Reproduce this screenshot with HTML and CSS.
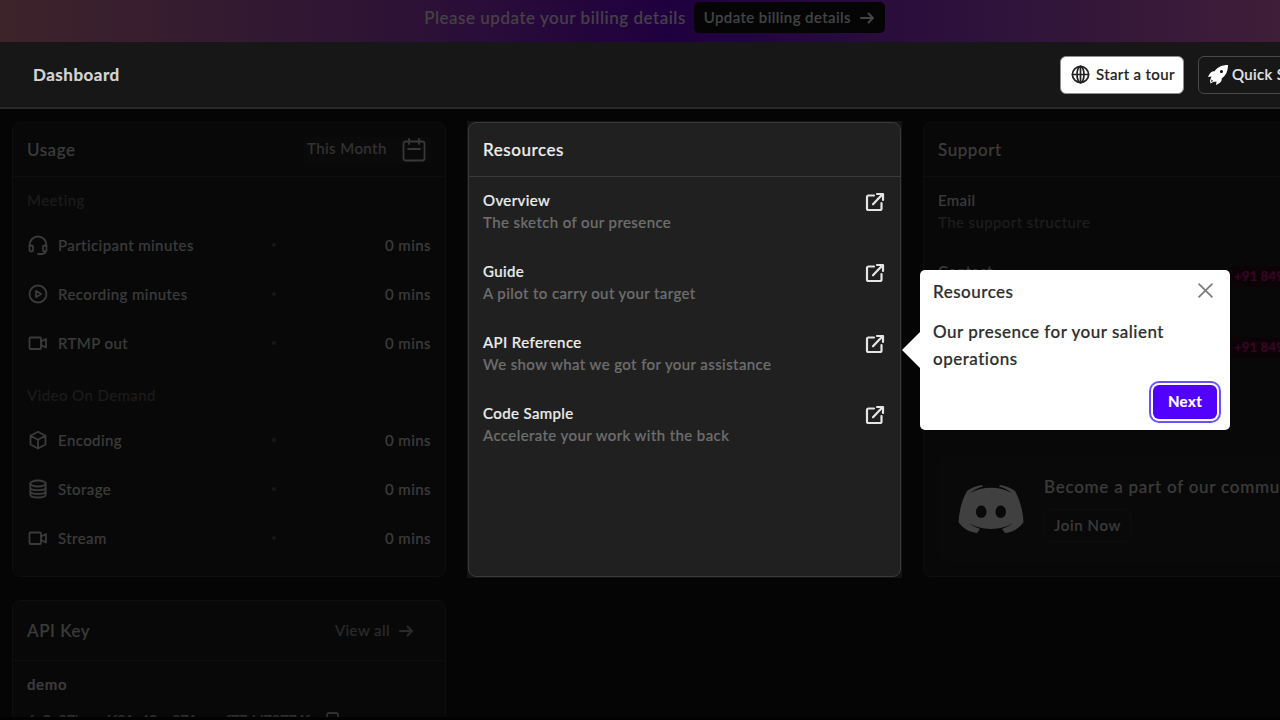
FILE: index.html
```html
<!DOCTYPE html>
<html lang="en">
<head>
<meta charset="utf-8">
<title>Dashboard</title>
<link rel="stylesheet" href="styles.css">
</head>
<body>
<svg class="sprite" width="0" height="0">
  <symbol id="ext" viewBox="0 0 20 20"><path d="M9 3.500H3.600Q2 3.500 2 5.100V16.400Q2 18 3.600 18H14.900Q16.500 18 16.500 16.400V11M8 12.300L17.500 2.300M12 2H18V8"/></symbol>
  <symbol id="arrow" viewBox="0 0 16 16"><path d="M2 8H14M9.500 3.500L14 8L9.500 12.500"/></symbol>
  <symbol id="camera" viewBox="0 0 20 20"><rect x="1.500" y="4.500" width="11.500" height="11.500" rx="1"/><path d="M13 8.500L18 6V14.500L13 12"/></symbol>
</svg>
<div class="page">
  <div class="banner">
    <span class="banner-text">Please update your billing details</span>
    <button class="banner-btn"><span>Update billing details</span><svg class="ic16"><use href="#arrow"/></svg></button>
  </div>
  <header class="topbar">
    <h1 class="title">Dashboard</h1>
    <div class="actions">
      <button class="btn light"><svg class="globe" viewBox="0 0 20 20"><circle cx="10" cy="10" r="8.500"/><ellipse cx="10" cy="10" rx="3.700" ry="8.500"/><path d="M10 1.500V18.500M1.500 10H18.500"/></svg><span>Start a tour</span></button>
      <button class="btn dark"><svg class="rocket" viewBox="0 0 20 20"><path fill-rule="evenodd" d="M20 0C14 0 9.500 2 6.500 6.300C4 6 2 7.500 0 12L3.500 11.500L2 15.500L2.500 18.500L5 17L8.500 16.500L8 20C12.500 18 14 16 13.700 13.500C18 10.500 20 6 20 0ZM13.500 4.900A1.600 1.600 0 1 1 13.400 8.100A1.600 1.600 0 0 1 13.500 4.900ZM3.600 14.500L5.200 16L3 16.800Z"/></svg><span>Quick Start</span></button>
    </div>
  </header>
  <main class="grid">
    <section class="card">
      <div class="card-head"><h2>Usage</h2><div class="month"><span>This Month</span><svg class="cal" viewBox="0 0 24 24"><rect x="1.500" y="3.500" width="21" height="19" rx="2"/><path d="M7 1V6M17 1V6M6 11H18"/></svg></div></div>
      <p class="label">Meeting</p>
      <div class="row"><svg class="ic"><path d="M1.500 12V10A8.500 8.500 0 0 1 18.500 10V14Q18.500 18.500 14 19H10M1.500 12C1.500 10 5 10 5 12V15C5 17 1.500 17 1.500 15ZM18.500 12C18.500 10 15 10 15 12V15C15 17 18.500 17 18.500 15"/></svg><span>Participant minutes</span><i></i><b>0 mins</b></div>
      <div class="row"><svg class="ic"><circle cx="10" cy="10" r="8.500"/><path d="M8 6.800L13 10L8 13.200Z"/></svg><span>Recording minutes</span><i></i><b>0 mins</b></div>
      <div class="row"><svg class="ic"><use href="#camera"/></svg><span>RTMP out</span><i></i><b>0 mins</b></div>
      <p class="label second">Video On Demand</p>
      <div class="row"><svg class="ic"><path d="M10 1.800L17.500 5.800V14.500L10 18.500L2.500 14.500V5.800ZM2.500 5.800L10 9.800L17.500 5.800M10 9.800V18.500"/></svg><span>Encoding</span><i></i><b>0 mins</b></div>
      <div class="row"><svg class="ic"><ellipse cx="10" cy="4.500" rx="7.700" ry="3"/><path d="M2.300 4.500V15.500C2.300 19.500 17.700 19.500 17.700 15.500V4.500M2.300 8.200C2.300 12.200 17.700 12.200 17.700 8.200M2.300 11.900C2.300 15.900 17.700 15.900 17.700 11.900"/></svg><span>Storage</span><i></i><b>0 mins</b></div>
      <div class="row"><svg class="ic"><use href="#camera"/></svg><span>Stream</span><i></i><b>0 mins</b></div>
    </section>
    <div class="spot">
      <section class="card lit">
        <div class="card-head"><h2>Resources</h2></div>
        <div class="item"><div><h3>Overview</h3><p>The sketch of our presence</p></div><svg class="ext"><use href="#ext"/></svg></div>
        <div class="item"><div><h3>Guide</h3><p>A pilot to carry out your target</p></div><svg class="ext"><use href="#ext"/></svg></div>
        <div class="item"><div><h3>API Reference</h3><p>We show what we got for your assistance</p></div><svg class="ext"><use href="#ext"/></svg></div>
        <div class="item"><div><h3>Code Sample</h3><p>Accelerate your work with the back</p></div><svg class="ext"><use href="#ext"/></svg></div>
      </section>
    </div>
    <section class="card support">
      <div class="card-head"><h2>Support</h2></div>
      <div class="item"><div><h3>Email</h3><p>The support structure</p></div></div>
      <div class="item"><h3>Contact</h3><span class="phone">+91 8490959</span></div>
      <div class="item"><span class="phone">+91 8490959</span></div>
      <div class="community">
        <svg class="discord" viewBox="0 0 66 50"><path fill-rule="evenodd" d="M25 2.500L24 1C17 2 12 4.500 9 7C4 16 1 27 .5 38C5 45 12 48 19 49L22 45C17 43 13 41 10.500 38.500C22 47 44 47 55.500 38.500C53 41 49 43 44 45L47 49C54 48 61 45 65.500 38C65 27 62 16 57 7C54 4.500 49 2 42 1L41 2.500C47 4 51 6.500 54 9C41 2 25 2 12 9C15 6.500 19 4 25 2.500ZM23.300 21.500C26.200 21.500 28.500 24.300 28.500 27.800C28.500 31.200 26.200 34 23.300 34C20.400 34 18 31.200 18 27.800C18 24.300 20.400 21.500 23.300 21.500ZM42.700 21.500C45.600 21.500 48 24.300 48 27.800C48 31.200 45.600 34 42.700 34C39.800 34 37.500 31.200 37.500 27.800C37.500 24.300 39.800 21.500 42.700 21.500Z"/></svg>
        <div class="join"><h4>Become a part of our community</h4><button>Join Now</button></div>
      </div>
    </section>
    <section class="card api">
      <div class="card-head tall"><h2>API Key</h2><a class="view"><span>View all</span><svg class="ic16"><use href="#arrow"/></svg></a></div>
      <p class="demo">demo</p>
      <div class="key"><span>6a2e87bcce6f81a42ea871eaecf77dd78774f</span><svg class="copy" viewBox="0 0 16 16"><rect x="3" y="1" width="11" height="12" rx="2"/></svg></div>
    </section>
  </main>
</div>
<div class="tour">
  <div class="tour-head"><span>Resources</span><svg class="close" viewBox="0 0 14 14"><path d="M1 1L13 13M13 1L1 13"/></svg></div>
  <p>Our presence for your salient operations</p>
  <button class="next">Next</button>
</div>
</body>
</html>
```
FILE: styles.css
```css
* { box-sizing: border-box; margin: 0; padding: 0; }
html, body { width: 1280px; height: 720px; overflow: hidden; background: #020202; }
body { font-family: Lato, "Open Sans", sans-serif; font-weight: 500; font-size: 15px; position: relative; letter-spacing: .42px; -webkit-text-stroke: .2px currentColor; }
button { font: inherit; letter-spacing: inherit; border: 0; background: none; }
h1, h2, h3, h4 { font-weight: 500; }
svg { fill: none; stroke: currentColor; stroke-width: 1.8; stroke-linecap: round; stroke-linejoin: round; flex: none; display: block; }
.sprite { position: absolute; }
.page { width: 1280px; height: 717px; overflow: hidden; background: #050505; display: flex; flex-direction: column; }
.banner { height: 42px; flex: none; width: 1309px; padding-bottom: 7px; display: flex; align-items: center; justify-content: center; gap: 8px; color: #464047; background: linear-gradient(90deg, #3d242a 0%, #2d1136 32%, #1f003f 51%, #2d113b 73%, #3f1e38 98%); }
.banner-text { font-size: 17px; letter-spacing: .53px; padding-bottom: 1px; }
.banner-btn { width: 191px; height: 31px; border-radius: 5px; background: #050505; color: #454545; display: flex; align-items: center; justify-content: center; gap: 8px; padding-bottom: 2px; white-space: nowrap; }
.ic16 { width: 16px; height: 16px; stroke-width: 2; }
.banner-btn .ic16 { margin-top: 2px; }
.topbar { width: 1368px; height: 67px; flex: none; background: #171717; border-bottom: 2px solid #292929; display: flex; align-items: center; justify-content: space-between; padding: 0 0 0 33px; }
.title { color: #d5d5d5; font-size: 17px; font-weight: 700; letter-spacing: .5px; }
.actions { display: flex; gap: 14px; }
.btn { height: 38px; border-radius: 6px; display: flex; align-items: center; white-space: nowrap; }
.btn span { padding-bottom: 2px; }
.light { width: 124px; background: #fff; color: #222; border: 1px solid #8e8e8e; padding-left: 10px; gap: 6px; letter-spacing: .35px; }
.dark { width: 170px; color: #e8e8e8; border: 1px solid #494949; padding-left: 9px; gap: 4px; letter-spacing: .35px; }
.globe { width: 19px; height: 19px; }
.rocket { width: 20px; height: 20px; fill: #fff; stroke: none; }
.grid { flex: none; padding: 13px 12px 0; display: grid; grid-template-columns: 434px 433px 433px; grid-template-rows: 455px 455px; gap: 23px 22px; }
.card { border: 1px solid #0e0e0e; border-radius: 8px; background: #080808; color: #3b3b3b; height: 455px; }
.card-head { height: 54px; border-bottom: 1px solid #0e0e0e; display: flex; align-items: center; justify-content: space-between; padding: 0 14px; }
.card-head h2 { font-size: 17px; letter-spacing: .55px; padding-bottom: 1px; }
.month { width: 127px; height: 26px; background: #0a0a0a; display: flex; align-items: center; justify-content: space-between; padding: 0 5px 0 3px; color: #323232; }
.month span { padding-bottom: 3px; }
.cal { width: 24px; height: 24px; color: #383838; }
.label { color: #1b1b1b; height: 44px; padding: 3px 14px 0; line-height: 40px; }
.label.second { height: 49px; padding-top: 8px; }
.row { height: 48.700px; display: grid; grid-template-columns: 30px 214px 5px 1fr; align-items: center; padding: 0 14px 0 15px; }
.row b { font-weight: 500; text-align: right; }
.row i { width: 4px; height: 4px; border-radius: 50%; background: #181818; }
.ic { width: 20px; height: 20px; }
.spot { background: #131313; margin: -1px; padding: 1px; height: 457px; }
.lit { background: #202020; border-color: #3a3a3a; color: #ededed; }
.lit .card-head { border-color: #3a3a3a; }
.item { height: 71px; padding: 12px 15px 0 14px; display: flex; justify-content: space-between; }
.item h3 { font-size: 15px; line-height: 22px; letter-spacing: .38px; }
.item p { line-height: 22px; color: #6e6e6e; letter-spacing: .4px; }
.ext { width: 20px; height: 20px; margin-top: 3px; stroke-width: 2.200; color: #e5e5e5; }
.support .item p { color: #1d1d1d; }
.phone { color: #3a0425; background: #0c0307; width: 111px; height: 21px; margin: 6px 0 0 auto; font-size: 13px; line-height: 20px; padding-left: 5px; border-radius: 5px; font-weight: 700; white-space: nowrap; letter-spacing: .2px; }
.community { height: 106px; margin: 66px 14px 0; background: #090909; border-radius: 8px; display: flex; align-items: center; padding: 0 0 0 20px; gap: 20px; }
.discord { width: 66px; height: 50px; fill: #404040; stroke: none; }
.join { display: flex; flex-direction: column; align-items: flex-start; gap: 11px; white-space: nowrap; }
.join h4 { font-size: 17px; line-height: 22px; letter-spacing: .75px; }
.join button { width: 87px; height: 33px; border: 1px solid #0d0d0d; border-radius: 6px; color: #3b3b3b; padding-bottom: 1px; letter-spacing: .6px; }
.tall { height: 60px; }
.view { display: flex; align-items: center; gap: 8px; margin-right: 17px; color: #2a2a2a; }
.view span { padding-bottom: 2px; }
.demo { font-weight: 700; padding: 12px 14px 0; line-height: 22px; letter-spacing: .6px; }
.key { display: flex; gap: 14px; padding: 14px 14px 0; line-height: 22px; align-items: center; color: #303030; }
.key span { letter-spacing: -.4px; }
.copy { width: 16px; height: 16px; }
.tour { position: absolute; left: 920px; top: 270px; width: 310px; height: 160px; background: #fff; border-radius: 5px; color: #2d2d2d; padding: 10px 13px; display: flex; flex-direction: column; font-size: 17px; letter-spacing: .5px; }
.tour::before { content: ""; position: absolute; left: -18px; top: 62px; border: 18px solid transparent; border-left: 0; border-right-color: #fff; }
.tour-head { display: flex; justify-content: space-between; line-height: 24px; }
.close { width: 15px; height: 15px; margin: 3px 4px 0 0; color: #777; stroke-width: 1.500; }
.tour p { margin-top: 15px; line-height: 26.500px; }
.next { width: 64px; height: 34px; border-radius: 6px; background: #5200ff; color: #fff; font-weight: 700; font-size: 15px; align-self: flex-end; margin: 13px 0 0; padding-bottom: 2px; letter-spacing: .4px; box-shadow: 0 0 0 2px #fff, 0 0 0 4px #6851ff; }
```
